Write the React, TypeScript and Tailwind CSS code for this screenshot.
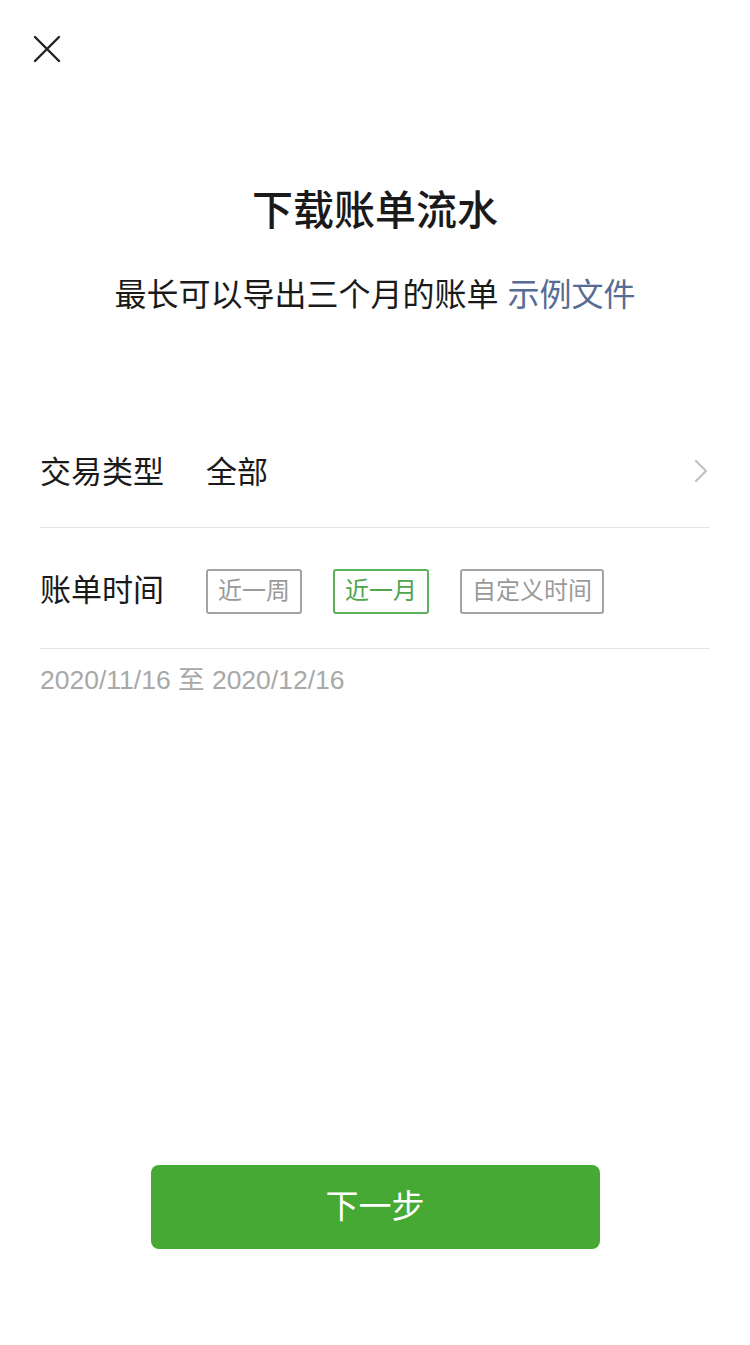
import { useState } from "react";

const font = { fontFamily: '"Liberation Sans", "Noto Sans CJK SC", sans-serif' };

function CloseIcon() {
    return (
        <svg width="28" height="28" viewBox="0 0 28 28" fill="none">
            <path d="M2 2 L26 26 M26 2 L2 26" stroke="#222" strokeWidth="2.4" strokeLinecap="round" />
        </svg>
    );
}

function Chevron() {
    return (
        <svg width="16" height="24" viewBox="0 0 16 24" fill="none">
            <path d="M3 2 L13 12 L3 22" stroke="#c4c4c6" strokeWidth="2.4" strokeLinecap="round" strokeLinejoin="round" />
        </svg>
    );
}

const ranges = ["近一周", "近一月", "自定义时间"];

export default function App() {
    const [range, setRange] = useState("近一月");

    return (
        <div className="min-h-[1345px] w-[750px] bg-white flex flex-col text-[#1a1a1a]" style={font}>
            <div className="pt-[35px] pl-[33px]">
                <button className="block">
                    <CloseIcon />
                </button>
            </div>

            <h1 className="mt-[120px] text-center text-[41px] leading-[56px] font-medium">下载账单流水</h1>
            <p className="mt-[34px] text-center text-[32px] leading-[44px]">
                最长可以导出三个月的账单 <span className="text-[#576b95]">示例文件</span>
            </p>

            <div className="mt-[98px] px-[40px]">
                <div className="h-[113px] pt-[4px] flex items-center border-b border-[#e3e3e3]">
                    <div className="w-[166px] text-[31px]">交易类型</div>
                    <div className="flex-1 text-[31px]">全部</div>
                    <div className="pr-[1px] -mt-[4px]">
                        <Chevron />
                    </div>
                </div>
                <div className="h-[121px] pt-[6px] flex items-center border-b border-[#e3e3e3]">
                    <div className="w-[166px] text-[31px]">账单时间</div>
                    <div className="flex gap-[31px]">
                        {ranges.map((r) => (
                            <button
                                key={r}
                                onClick={() => setRange(r)}
                                className={
                                    r === range
                                        ? "h-[45px] px-[10px] rounded-[3px] border-2 border-[#5bb15a] text-[#4fa64e] text-[24px] leading-none"
                                        : "h-[45px] px-[10px] rounded-[3px] border-2 border-[#a3a3a3] text-[#9a9a9a] text-[24px] leading-none"
                                }
                            >
                                {r}
                            </button>
                        ))}
                    </div>
                </div>
                <div className="mt-[15px] text-[26.5px] leading-[32px] text-[#a8a8a8]">2020/11/16 至 2020/12/16</div>
            </div>

            <div className="flex-1" />

            <button className="mx-auto mb-[96px] w-[449px] h-[84px] rounded-[8px] bg-[#46a934] text-white text-[33px]">
                下一步
            </button>
        </div>
    );
}
